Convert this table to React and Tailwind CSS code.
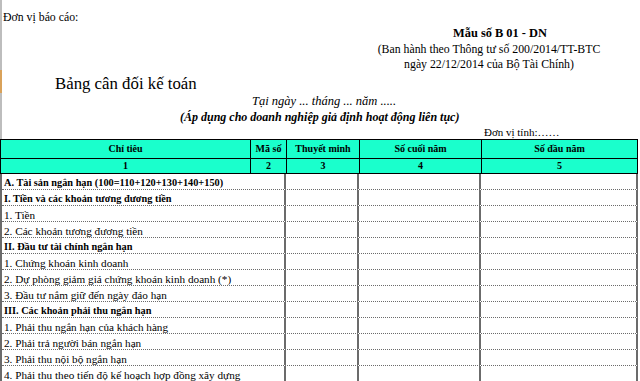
const rows = [
  { text: "A. Tài sản ngắn hạn (100=110+120+130+140+150)", bold: true },
  { text: "I. Tiền và các khoản tương đương tiền", bold: true },
  { text: "1. Tiền" },
  { text: "2. Các khoản tương đương tiền" },
  { text: "II. Đầu tư tài chính ngắn hạn", bold: true },
  { text: "1. Chứng khoán kinh doanh" },
  { text: "2. Dự phòng giảm giá chứng khoán kinh doanh (*)" },
  { text: "3. Đầu tư nắm giữ đến ngày đáo hạn" },
  { text: "III. Các khoản phải thu ngắn hạn", bold: true },
  { text: "1. Phải thu ngắn hạn của khách hàng" },
  { text: "2. Phải trả người bán ngắn hạn" },
  { text: "3. Phải thu nội bộ ngắn hạn" },
  { text: "4. Phải thu theo tiến độ kế hoạch hợp đồng xây dựng" },
];

export default function App() {
  return (
    <div className="w-[640px] h-[381px] overflow-hidden bg-white text-black font-['Liberation_Serif',serif]">
      {/* heading block */}
      <div className="relative h-[139px] border-l-2 border-[#bdbdbd]">
        <div className="absolute left-[-2px] top-[70px] h-[23px] w-[2px] bg-[#d9a25a]"></div>
        <div className="pt-[10px] pl-[1px] text-[11.8px] leading-[15px]">Đơn vị báo cáo:</div>
        <div className="ml-[361px] mt-[1px] w-[252px] text-center text-[11.8px] leading-[15.5px]">
          <div className="font-bold text-[12.4px] pl-[22px]">Mẫu số B 01 - DN</div>
          <div>(Ban hành theo Thông tư số 200/2014/TT-BTC</div>
          <div>ngày 22/12/2014 của Bộ Tài Chính)</div>
        </div>
        <div className="ml-[53px] mt-[1.5px] text-[16.8px] leading-[20px]">Bảng cân đối kế toán</div>
        <div className="ml-[250px] text-[12.5px] leading-[15px] italic">Tại ngày ... tháng ... năm .....</div>
        <div className="ml-[178px] mt-[1px] text-[12px] leading-[15px] italic font-bold">
          (Áp dụng cho doanh nghiệp giả định hoạt động liên tục)
        </div>
        <div className="ml-[482px] mt-[0.5px] text-[11px] leading-[13px]">Đơn vị tính:……</div>
      </div>

      {/* table header */}
      <div className="w-[638px] bg-[#1affcc] border-t border-l border-black text-[10px] font-bold leading-none">
        <div className="flex h-[19px] border-b border-black">
          <div className="w-[250px] flex items-center justify-center border-r border-black">Chỉ tiêu</div>
          <div className="w-[36px] flex items-center justify-center border-r border-black">Mã số</div>
          <div className="w-[73px] flex items-center justify-center border-r border-black">Thuyết minh</div>
          <div className="w-[122px] flex items-center justify-center border-r border-black">Số cuối năm</div>
          <div className="flex-1 flex items-center justify-center border-r border-black">Số đầu năm</div>
        </div>
        <div className="flex h-[15px] border-b border-black">
          <div className="w-[250px] flex items-center justify-center border-r border-black">1</div>
          <div className="w-[36px] flex items-center justify-center border-r border-black">2</div>
          <div className="w-[73px] flex items-center justify-center border-r border-black">3</div>
          <div className="w-[122px] flex items-center justify-center border-r border-black">4</div>
          <div className="flex-1 flex items-center justify-center border-r border-black">5</div>
        </div>
      </div>

      {/* table body */}
      <div className="w-[638px] border-l-2 border-[#6b6b6b]">
        {rows.map((r) => (
          <div key={r.text} className="flex h-[16px] border-b border-dotted border-[#6b6b6b]">
            <div
              className={`w-[284px] pl-[2px] pt-[3px] flex items-center whitespace-nowrap border-r-2 border-[#6b6b6b] ${
                r.bold ? "font-bold text-[10.3px]" : "text-[11.2px]"
              }`}
            >
              {r.text}
            </div>
            <div className="w-[73px] border-r-2 border-[#6b6b6b]"></div>
            <div className="w-[122px] border-r-2 border-[#6b6b6b]"></div>
            <div className="flex-1 border-r-2 border-[#6b6b6b]"></div>
          </div>
        ))}
      </div>
    </div>
  );
}
